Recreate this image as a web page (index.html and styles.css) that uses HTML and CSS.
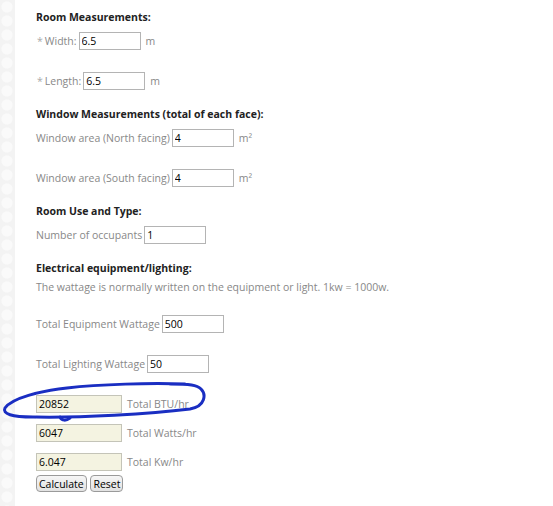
FILE: index.html
```html
<!DOCTYPE html>
<html lang="en">
<head>
    <meta charset="UTF-8">
    <meta name="viewport" content="width=device-width, initial-scale=1.0">
    <title>Air Conditioning Calculator</title>
    <link rel="stylesheet" href="styles.css">
</head>
<body>
    <div class="strip"></div>
    <div class="main">
        <form class="calc">
            <!-- Room -->
            <h3>Room Measurements:</h3>
            <div class="row"><label><span class="req">*</span>Width:</label><input type="text" value="6.5"><span class="unit">m</span></div>
            <div class="row"><label><span class="req">*</span>Length:</label><input type="text" value="6.5"><span class="unit">m</span></div>

            <!-- Windows -->
            <h3>Window Measurements (total of each face):</h3>
            <div class="row"><label>Window area (North facing)</label><input type="text" value="4"><span class="unit">m&sup2;</span></div>
            <div class="row"><label>Window area (South facing)</label><input type="text" value="4"><span class="unit">m&sup2;</span></div>

            <!-- Use -->
            <h3>Room Use and Type:</h3>
            <div class="row"><label>Number of occupants</label><input type="text" value="1"></div>

            <!-- Equipment -->
            <h3>Electrical equipment/lighting:</h3>
            <p class="note">The wattage is normally written on the equipment or light. 1kw = 1000w.</p>
            <div class="row"><label>Total Equipment Wattage</label><input type="text" value="500"></div>
            <div class="row"><label>Total Lighting Wattage</label><input type="text" value="50"></div>

            <!-- Results -->
            <div class="result btu"><input type="text" class="out" value="20852" readonly><span class="unit">Total BTU/hr</span>
                <svg class="circle" width="215" height="50" viewBox="0 0 215 50">
                    <path d="M185 6 C150 5 100 6 67 10 C40 13 12 20 5 30 C2 36 12 39 33 39 C80 40 150 36 190 31 C206 28 206 16 201 11 C197 7 190 6 170 6" />
                    <path d="M60 39 C62 43 66 43 70 40" />
                </svg>
            </div>
            <div class="result"><input type="text" class="out" value="6047" readonly><span class="unit">Total Watts/hr</span></div>
            <div class="result"><input type="text" class="out" value="6.047" readonly><span class="unit">Total Kw/hr</span></div>

            <div class="buttons">
                <button type="button">Calculate</button>
                <button type="reset">Reset</button>
            </div>
        </form>
    </div>
</body>
</html>
```

FILE: styles.css
```css
body {
    margin: 0;
    display: flex;
    min-height: 506px;
    font-family: "Open Sans", Arial, sans-serif;
    font-size: 10.5px;
    color: #888;
    background: #fff;
}
.strip {
    width: 15px;
    flex-shrink: 0;
    background-color: #f3f3f3;
    background-image: radial-gradient(circle at 7px 7px, #fafafa 5px, transparent 6px);
    background-size: 15px 14px;
}
.main {
    flex: 1;
    padding: 8px 0 0 21px;
}
h3 {
    margin: 0 0 6px 0;
    font-size: 10.5px;
    line-height: 18px;
    font-weight: bold;
    color: #222;
}
.row {
    display: flex;
    align-items: center;
    height: 18px;
    margin-bottom: 22px;
}
.row + h3 {
    margin-top: -7px;
}
.req {
    color: #aaa;
    margin: 0 2px 0 1px;
}
input {
    box-sizing: border-box;
    width: 62px;
    height: 18px;
    margin: 0 5px 0 2px;
    padding: 0 2px;
    border: 1px solid #b4b4b4;
    font-family: "Open Sans", Arial, sans-serif;
    font-size: 10.5px;
    color: #000;
    background: #fff;
}
.note {
    margin: -5px 0 19px 0;
    line-height: 18px;
}
.result {
    position: relative;
    display: flex;
    align-items: center;
    height: 18px;
    margin-bottom: 11px;
}
input.out {
    width: 86px;
    margin: 0 5px 0 0;
    background: #f4f3e1;
    border-color: #c4c4b8;
}
.circle {
    position: absolute;
    left: -36px;
    top: -17px;
    fill: none;
    stroke: #1a2ec2;
    stroke-width: 3;
    stroke-linecap: round;
}
.buttons {
    margin-top: -7px;
}
button {
    font-family: "Open Sans", Arial, sans-serif;
    font-size: 10.5px;
    color: #000;
    padding: 0 2px;
    height: 17px;
    line-height: 14px;
    border: 1px solid #9a9a9a;
    border-radius: 4px;
    background: linear-gradient(#f6f6f6, #e2e2e2);
    margin: 0 1px 0 0;
}
```
